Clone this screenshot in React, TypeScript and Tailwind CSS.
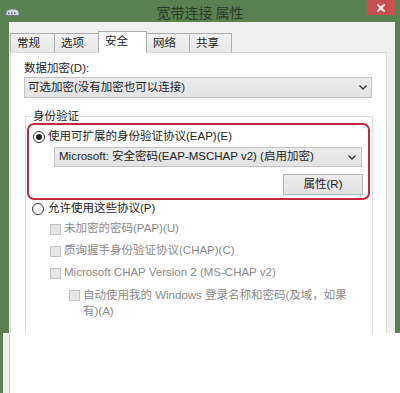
import React from 'react';

const tabs = [
  { label: '常规', w: 'w-[45px]' },
  { label: '选项', w: 'w-[45px]' },
  { label: '安全', w: 'w-[49px]', active: true },
  { label: '网络', w: 'w-[44px]' },
  { label: '共享', w: 'w-[43px]' },
];

const Chevron: React.FC = () => (
  <svg width="8" height="5" viewBox="0 0 8 5" className="shrink-0">
    <path d="M0.5 0.5 L4 4 L7.5 0.5" fill="none" stroke="#333" strokeWidth="1.3" />
  </svg>
);

const Radio: React.FC<{ checked?: boolean }> = ({ checked }) => (
  <span className="w-[12px] h-[12px] rounded-full border border-[#333] bg-white flex items-center justify-center shrink-0">
    {checked && <span className="w-[6px] h-[6px] rounded-full bg-[#222]"></span>}
  </span>
);

const Check: React.FC = () => (
  <span className="block w-[11px] h-[11px] border border-[#c4c4c4] bg-[#e6e6e6] shrink-0"></span>
);

const NetIcon: React.FC = () => (
  <svg width="15" height="8" viewBox="0 0 15 8">
    <path d="M1 7.5 L1 5 Q1 1 7.5 1 Q14 1 14 5 L14 7.5 Z" fill="#cfd6dc" stroke="#6f7c86" strokeWidth="1" />
    <rect x="3" y="4.5" width="1.5" height="1.5" fill="#5b6670" />
    <rect x="6" y="4.5" width="1.5" height="1.5" fill="#5b6670" />
    <rect x="9" y="4.5" width="1.5" height="1.5" fill="#5b6670" />
  </svg>
);

const App: React.FC = () => {
  return (
    <div className="w-[400px] h-[393px] overflow-hidden bg-[#5b8052] text-[11.5px] text-[#222] font-['Liberation_Sans','Noto_Sans_CJK_SC',sans-serif]">
      {/* title bar */}
      <div className="h-[22px] flex items-start">
        <div className="w-[40px] h-full flex items-center pl-[5px] pt-[1px]">
          <NetIcon />
        </div>
        <div className="flex-1 text-center text-[14px] leading-[24px] text-[#2c3a2a] font-['Noto_Sans_CJK_SC',sans-serif]">
          宽带连接 属性
        </div>
        <div className="w-[40px] flex justify-end pr-[5px]">
          <div className="w-[28px] h-[15px] bg-[#c75050] flex items-center justify-center">
            <svg width="8" height="8" viewBox="0 0 8 8">
              <path d="M0.5 0.5 L7.5 7.5 M7.5 0.5 L0.5 7.5" stroke="#fff" strokeWidth="1.8" />
            </svg>
          </div>
        </div>
      </div>

      {/* window body */}
      <div className="h-[311px] flex pl-[9px] pr-[5px]">
        <div className="flex-1 bg-[#f0f0f0] pl-px pr-[8px] flex flex-col min-h-0">
          <div className="h-[21px] mt-[9px] flex items-end pl-px shrink-0">
            {tabs.map(t => (
              <div
                key={t.label}
                className={
                  t.active
                    ? `${t.w} h-[22px] -mb-px -ml-px relative bg-white border border-b-0 border-[#acacac] pl-[6px] leading-[19px]`
                    : `${t.w} h-[19px] -ml-px bg-gradient-to-b from-[#f2f2f2] to-[#e6e6e6] border border-b-0 border-[#acacac] pl-[6px] leading-[18px]`
                }
              >
                {t.label}
              </div>
            ))}
          </div>

          <div className="flex-1 bg-white border border-b-0 border-[#d9d9d9] pl-[13px] pr-[14px] pt-[7px] min-h-0">
            <div className="leading-[16px]">数据加密(D):</div>
            <div className="mt-[1px] h-[21px] border border-[#c3c3c3] bg-gradient-to-b from-[#ececec] to-[#e3e3e3] flex items-center pl-[3px] pr-[4px]">
              <span className="flex-1">可选加密(没有加密也可以连接)</span>
              <Chevron />
            </div>

            <fieldset className="mt-[11px] ml-px -mr-px border border-[#dcdcdc] h-[225px]">
              <legend className="ml-[6px] px-[1px] leading-[14px]">身份验证</legend>

              <div className="ml-px mr-[2px] border-2 border-[#c42a3b] rounded-[7px] pl-[4px] pr-[4px] pt-[4px] pb-[3px]">
                <div className="flex items-center gap-[3px] h-[16px]">
                  <Radio checked />
                  <span>使用可扩展的身份验证协议(EAP)(E)</span>
                </div>
                <div className="mt-[2px] ml-[21px] mr-[2px] h-[20px] border border-[#c3c3c3] bg-gradient-to-b from-[#ececec] to-[#e3e3e3] flex items-center pl-[4px] pr-[5px]">
                  <span className="flex-1">Microsoft: 安全密码(EAP-MSCHAP v2) (启用加密)</span>
                  <Chevron />
                </div>
                <div className="mt-[7px] mr-px flex justify-end">
                  <button className="w-[80px] h-[21px] border border-[#b5b5b5] bg-gradient-to-b from-[#ededed] to-[#e2e2e2] text-[#222]">
                    属性(R)
                  </button>
                </div>
              </div>

              <div className="mt-[1px] pl-[6px] flex items-center gap-[4px] h-[16px]">
                <Radio />
                <span>允许使用这些协议(P)</span>
              </div>

              <div className="pl-[24px] text-[#8a8a8a] flex flex-col gap-[6px] mt-[4px]">
                <div className="flex items-center gap-[3px] h-[16px]">
                  <Check />
                  <span>未加密的密码(PAP)(U)</span>
                </div>
                <div className="flex items-center gap-[3px] h-[16px]">
                  <Check />
                  <span>质询握手身份验证协议(CHAP)(C)</span>
                </div>
                <div className="flex items-center gap-[3px] h-[16px]">
                  <Check />
                  <span>Microsoft CHAP Version 2 (MS-CHAP v2)</span>
                </div>
                <div className="flex items-start gap-[3px] pl-[19px] leading-[16px]">
                  <div className="pt-[3px] shrink-0">
                    <Check />
                  </div>
                  <span>
                    自动使用我的 Windows 登录名称和密码(及域，如果
                    <br />
                    有)(A)
                  </span>
                </div>
              </div>
            </fieldset>
          </div>
        </div>
      </div>

      {/* cropped lower part */}
      <div className="h-[60px] flex pl-[3px]">
        <div className="w-[6px] bg-[#eef0ec]"></div>
        <div className="flex-1 border-l border-[#c8c8c8] bg-white"></div>
      </div>
    </div>
  );
};

export default App;
